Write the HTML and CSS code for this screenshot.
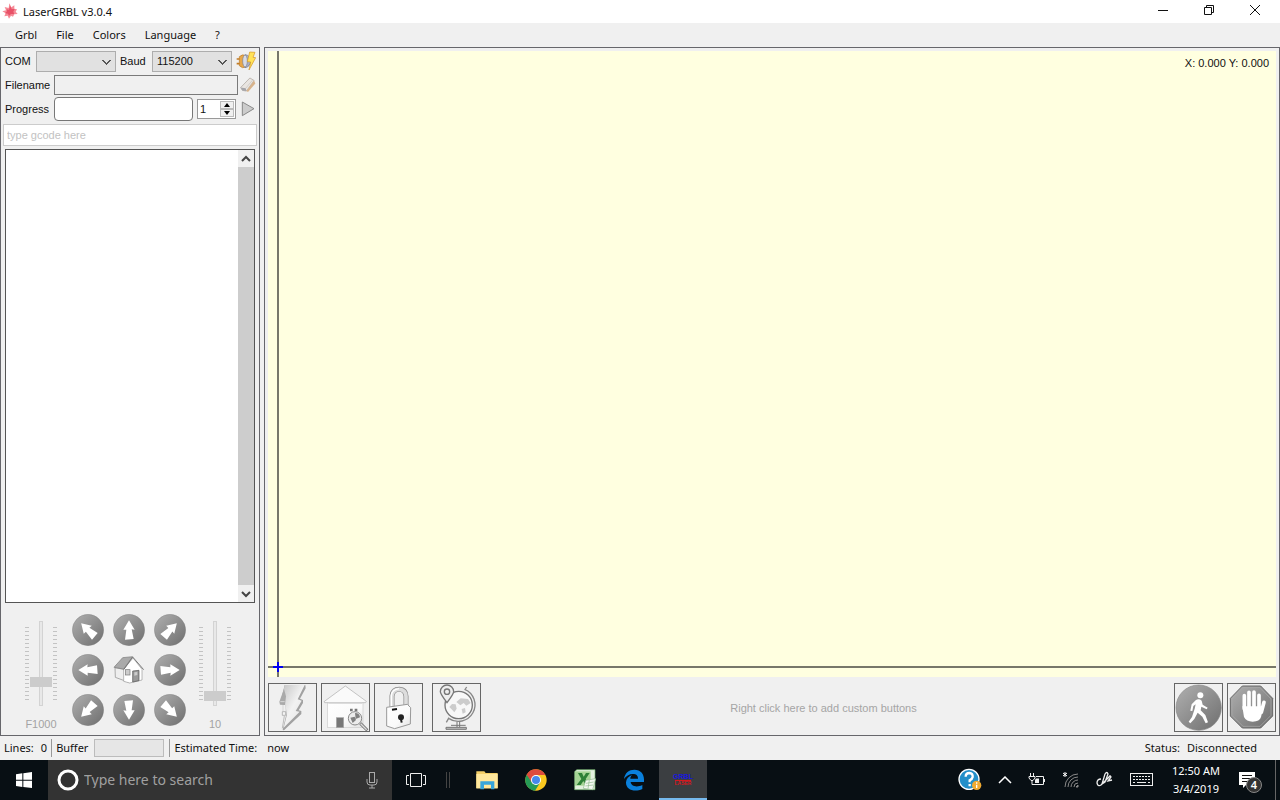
FILE: index.html
```html
<!DOCTYPE html>
<html lang="en">
<head>
<meta charset="utf-8">
<title>LaserGRBL v3.0.4</title>
<link rel="stylesheet" href="styles.css">
</head>
<body>
<svg class="defs" aria-hidden="true">
  <defs>
    <linearGradient id="ball" x1="0" y1="0" x2="1" y2="1"><stop offset="0" stop-color="#b0b0b0"/><stop offset="1" stop-color="#6e6e6e"/></linearGradient>
    <linearGradient id="pale" x1="0" y1="0" x2="1" y2="1"><stop offset="0" stop-color="#c4c4c4"/><stop offset=".5" stop-color="#f2f2f2"/><stop offset="1" stop-color="#e2e2e2"/></linearGradient>
    <linearGradient id="white" x1="0" y1="0" x2="1" y2="1"><stop offset="0" stop-color="#fff"/><stop offset=".6" stop-color="#fafafa"/><stop offset="1" stop-color="#e2e2e2"/></linearGradient>
    <symbol id="arrow" viewBox="0 0 96 96"><path d="M48 19 65 47 56 46 62 75 36 77 40 47 31 47Z" fill="#fff"/></symbol>
  </defs>
</svg>

<header class="titlebar">
  <svg class="app-icon" viewBox="0 0 48 48"><path d="M22 1 28 13 37 7 37 17 45 19 41 26 47 33 37 34 33 41 27 38 21 47 17 38 7 40 11 31 1 25 12 22 8 12 20 15Z" fill="#f58b97"/><path d="M24 8 29 18 38 18 34 26 37 33 27 33 21 38 18 32 9 31 15 25 14 19 21 20Z" fill="#e85268"/></svg>
  <h1 class="title">LaserGRBL v3.0.4</h1>
  <div class="window-buttons">
    <button type="button" aria-label="Minimize"><svg viewBox="0 0 12 12"><path d="M1 6.500H11"/></svg></button>
    <button type="button" aria-label="Restore"><svg viewBox="0 0 12 12"><path d="M1.500 3.500H8.500V10.500H1.500ZM3.500 3.500V1.500H10.500V8.500H8.500"/></svg></button>
    <button type="button" aria-label="Close"><svg viewBox="0 0 12 12"><path d="M1 1 11 11M11 1 1 11"/></svg></button>
  </div>
</header>

<nav class="menubar" aria-label="Main menu">
  <button type="button">Grbl</button><button type="button">File</button><button type="button">Colors</button><button type="button">Language</button><button type="button">?</button>
</nav>

<main class="workspace">
  <section class="panel side" aria-label="Control">
    <div class="form">
      <div class="row">
        <label class="short" for="com">COM</label>
        <select id="com" class="combo"><option></option></select>
        <label class="baud" for="baud">Baud</label>
        <select id="baud" class="combo"><option>115200</option></select>
        <button class="tool large" type="button" aria-label="Connect"><svg viewBox="0 0 60 60"><path d="M2 24H16M2 38H16" stroke="#c07c28" stroke-width="5"/><path d="M10 17Q20 8 28 14V48Q20 54 10 44Z" fill="#e8a748" stroke="#b97825" stroke-width="2"/><path d="M27 11Q42 12 45 30 42 48 27 50 18 31 27 11Z" fill="#a9aec2" stroke="#6e7182" stroke-width="2"/><ellipse cx="27" cy="30" rx="7" ry="18" fill="#d9dbe4" stroke="#7d8090" stroke-width="2"/><path d="M41 3 57 4 51 19 59 20 39 57 44 33 34 32Z" fill="#ffe258" stroke="#d59420" stroke-width="2"/></svg></button>
      </div>
      <div class="row">
        <label for="filename">Filename</label>
        <input id="filename" class="filename" type="text" readonly>
        <button class="tool" type="button" aria-label="Open file"><svg viewBox="6 6 50 50"><path d="M8 39 37 9 50 17 26 50 14 48Z" fill="#e9e5e1" stroke="#a49c94" stroke-width="2"/><path d="M26 50 50 17 54 26 31 53Z" fill="#d8b38b"/><path d="M8 39 24 41 26 50 13 48Z" fill="#a5a5aa"/><path d="M24 41 45 16" stroke="#c7c1bb" stroke-width="2"/></svg></button>
      </div>
      <div class="row">
        <label for="progress">Progress</label>
        <progress id="progress" class="progress" value="0" max="100"></progress>
        <div class="spinner">
          <input type="text" value="1" aria-label="Repeat count">
          <div class="spin-buttons">
            <button type="button" aria-label="Increase"><svg viewBox="0 0 6 4"><path d="M3 0 6 4H0Z"/></svg></button>
            <button type="button" aria-label="Decrease"><svg viewBox="0 0 6 4"><path d="M0 0H6L3 4Z"/></svg></button>
          </div>
        </div>
        <button class="tool" type="button" aria-label="Run"><svg viewBox="6 6 48 48"><path d="M13 9 48 29 13 50Z" fill="#ccc" stroke="#898989" stroke-width="3" stroke-linejoin="round"/></svg></button>
      </div>
    </div>
    <input class="gcode" type="text" placeholder="type gcode here" aria-label="Gcode">
    <div class="log">
      <div class="log-text"></div>
      <div class="scrollbar">
        <button type="button" aria-label="Scroll up"><svg viewBox="0 0 10 8"><path d="M1 6 5 2 9 6"/></svg></button>
        <div class="scroll-thumb"></div>
        <button type="button" aria-label="Scroll down"><svg viewBox="0 0 10 8"><path d="M1 2 5 6 9 2"/></svg></button>
      </div>
    </div>
    <div class="jog">
      <div class="slider">
        <div class="slider-body"><input id="speed" type="range" min="0" max="100" value="25"></div>
        <label for="speed">F1000</label>
      </div>
      <div class="jog-grid">
        <button type="button" aria-label="Up left"><svg viewBox="0 0 96 96"><circle cx="48" cy="48" r="47" fill="url(#ball)" stroke="#777"/><g transform="rotate(-45 48 48)"><use href="#arrow"/></g></svg></button>
        <button type="button" aria-label="Up"><svg viewBox="0 0 96 96"><circle cx="48" cy="48" r="47" fill="url(#ball)" stroke="#777"/><use href="#arrow"/></svg></button>
        <button type="button" aria-label="Up right"><svg viewBox="0 0 96 96"><circle cx="48" cy="48" r="47" fill="url(#ball)" stroke="#777"/><g transform="rotate(45 48 48)"><use href="#arrow"/></g></svg></button>
        <button type="button" aria-label="Left"><svg viewBox="0 0 96 96"><circle cx="48" cy="48" r="47" fill="url(#ball)" stroke="#777"/><g transform="rotate(-90 48 48)"><use href="#arrow"/></g></svg></button>
        <button type="button" aria-label="Home"><svg viewBox="0 0 96 96"><path d="M6 41 32 46 50 86 7 70Z" fill="#eee" stroke="#888" stroke-width="2"/><path d="M32 46 60 12 87 46V78L50 87 32 82Z" fill="#fff" stroke="#999" stroke-width="2"/><path d="M3 40 29 11 59 8 32 45Z" fill="#aaa" stroke="#777" stroke-width="2"/><path d="M32 47 59 9 92 47" fill="none" stroke="#777" stroke-width="3"/><rect x="37" y="47" width="14" height="16" fill="#ccc" stroke="#777" stroke-width="2"/><path d="M59 51 78 49V80L59 84Z" fill="#999" stroke="#555" stroke-width="2"/><path d="M64 55 73 54V63L64 65Z" fill="#ccc"/></svg></button>
        <button type="button" aria-label="Right"><svg viewBox="0 0 96 96"><circle cx="48" cy="48" r="47" fill="url(#ball)" stroke="#777"/><g transform="rotate(90 48 48)"><use href="#arrow"/></g></svg></button>
        <button type="button" aria-label="Down left"><svg viewBox="0 0 96 96"><circle cx="48" cy="48" r="47" fill="url(#ball)" stroke="#777"/><g transform="rotate(-135 48 48)"><use href="#arrow"/></g></svg></button>
        <button type="button" aria-label="Down"><svg viewBox="0 0 96 96"><circle cx="48" cy="48" r="47" fill="url(#ball)" stroke="#777"/><g transform="rotate(180 48 48)"><use href="#arrow"/></g></svg></button>
        <button type="button" aria-label="Down right"><svg viewBox="0 0 96 96"><circle cx="48" cy="48" r="47" fill="url(#ball)" stroke="#777"/><g transform="rotate(135 48 48)"><use href="#arrow"/></g></svg></button>
      </div>
      <div class="slider">
        <div class="slider-body"><input id="step" type="range" min="0" max="100" value="5"></div>
        <label for="step">10</label>
      </div>
    </div>
  </section>

  <section class="panel view" aria-label="Preview">
    <div class="preview">
      <span class="coords">X: 0.000 Y: 0.000</span>
      <svg class="origin" viewBox="0 0 10 10"><path d="M5 0V10M0 5H10" stroke="#0000f0" stroke-width="2"/></svg>
    </div>
    <div class="actions">
      <div class="group">
        <button type="button" aria-label="Reset"><svg viewBox="3 3 141 141"><path d="M50 6H112L113 16 96 47 105 51V60L92 82 100 84V93L48 142 44 141 54 98 53 66 36 62Z" fill="#a2a2a2"/><path d="M50 6H110L89 49 101 53 83 84 95 86 47 134 56 98 53 66 40 60Z" fill="url(#pale)"/><path d="M48 18 34 56 36 65 51 66 54 40Z" fill="#aaa"/><path d="M37 56H50" stroke="#d8d8d8" stroke-width="3"/><path d="M45 66V84" stroke="#ddd" stroke-width="4"/><path d="M43 86H53V97H43Z" fill="#f4f4f4" stroke="#999" stroke-width="2"/><path d="M49 99 43 136" stroke="#bbb" stroke-width="3"/></svg></button>
        <button type="button" aria-label="Homing"><svg viewBox="3 3 141 141"><rect x="20" y="52" width="106" height="82" fill="url(#white)" stroke="#ccc" stroke-width="2"/><path d="M9 56 73 9 136 55 134 59H11Z" fill="#fafafa" stroke="#aaa" stroke-width="2"/><path d="M22 61H124" stroke="#d8d8d8" stroke-width="3"/><rect x="46" y="104" width="22" height="30" fill="#777" stroke="#aaa" stroke-width="2"/><path d="M87 81H95M101 81H109" stroke="#777" stroke-width="8"/><path d="M118 121 139 142" stroke="#777" stroke-width="9"/><path d="M119 122 137 140" stroke="#ddd" stroke-width="4"/><circle cx="102" cy="106" r="20" fill="#ececec" stroke="#888" stroke-width="3"/><path d="M102 90Q116 90 117 103L104 108ZM88 104 101 101 105 111 95 120Z" fill="#808080"/></svg></button>
        <button type="button" aria-label="Unlock"><svg viewBox="3 3 141 141"><path d="M54 75V39Q56 19 76 19 95 20 96 40V70" fill="none" stroke="#888" stroke-width="15"/><path d="M54 75V39Q56 19 76 19 95 20 96 40V70" fill="none" stroke="#ddd" stroke-width="11"/><path d="M52 70V38Q54 19 75 17" fill="none" stroke="#fff" stroke-width="4"/><path d="M38 73 100 64 110 74 109 123 62 137 38 129Z" fill="url(#white)" stroke="#999" stroke-width="3" stroke-linejoin="round"/><path d="M54 80 69 78" stroke="#111" stroke-width="6"/><circle cx="81" cy="103" r="9" fill="#222"/><path d="M80 104 83 119" stroke="#222" stroke-width="6"/></svg></button>
      </div>
      <div class="group">
        <button type="button" aria-label="Set zero"><svg viewBox="3 3 141 141"><circle cx="80" cy="66" r="41" fill="#f8f8f8" stroke="#777" stroke-width="4"/><path d="M98 19A50 50 0 1 1 50 106M98 21 104 12M51 104 43 118" fill="none" stroke="#888" stroke-width="4"/><path d="M52 72 60 63 71 64 74 77 67 88 58 78ZM73 57 86 46 108 48 116 60 103 68 95 60 85 67ZM89 78 99 75 101 88 92 92Z" fill="#ccc"/><path d="M75 116V132M83 116V132" stroke="#777" stroke-width="3"/><path d="M57 127H101M42 139V133H103V139Z" fill="#bbb" stroke="#777" stroke-width="3"/><path d="M45 59Q25 32 25 26A20 20 0 0 1 65 26Q65 32 45 59Z" fill="#eee" stroke="#777" stroke-width="4"/><circle cx="45" cy="26" r="8" fill="#eee" stroke="#777" stroke-width="4"/></svg></button>
      </div>
      <p class="hint">Right click here to add custom buttons</p>
      <div class="group">
        <button type="button" aria-label="Resume"><svg viewBox="3 3 141 141"><circle cx="74" cy="74" r="68" fill="url(#ball)" stroke="#888" stroke-width="2"/><circle cx="79" cy="37" r="9" fill="#fff"/><path d="M65 52Q74 45 83 53L86 65 101 74 98 79 82 71 80 82 94 96 102 118 95 121 85 101 71 89 61 108 49 121 44 116 54 102 62 77 65 64 58 69 55 84 49 83 53 64Z" fill="#fff"/></svg></button>
        <button type="button" aria-label="Stop"><svg viewBox="3 3 141 141"><path d="M46 9H101L137 46V99L101 135H46L10 99V46Z" fill="url(#ball)" stroke="#666" stroke-width="3"/><path d="M47 14H99L132 48V97L99 130H48L15 97V48Z" fill="none" stroke="#aaa" stroke-width="2"/><path d="M52 38V78M66 28V76M81 27V76M96 37V80M111 58 103 88" stroke="#fff" stroke-width="11" stroke-linecap="round"/><path d="M46 70H101L106 85 102 102Q98 116 77 116 58 116 51 102Z" fill="#fff"/></svg></button>
      </div>
    </div>
  </section>
</main>

<footer class="statusbar">
  <span class="lines">Lines: <span>0</span></span>
  <span class="buffer"><label for="buffer">Buffer</label><progress id="buffer" value="0" max="100"></progress></span>
  <span class="time">Estimated Time: <span>now</span></span>
  <span class="status">Status: <span>Disconnected</span></span>
</footer>

<nav class="taskbar" aria-label="Taskbar">
  <button class="app" type="button" aria-label="Start"><svg width="16" height="16" viewBox="0 0 48 48"><path d="M0 7 19 4V23H0ZM22 4 48 0V23H22ZM0 26H19V45L0 42ZM22 26H48V48L22 45Z" fill="#fff"/></svg></button>
  <div class="search">
    <svg width="22" height="22" viewBox="0 0 22 22"><circle cx="11" cy="11" r="9" fill="none" stroke="#fff" stroke-width="3"/></svg>
    <input type="text" placeholder="Type here to search" aria-label="Search">
    <svg width="12" height="18" viewBox="0 0 12 18" fill="none" stroke="#aaa"><rect x="3.500" y="1.500" width="5" height="10"/><path d="M1 8V11Q1 14 4 14H8Q11 14 11 11V8M6 14V17M3 17H9"/></svg>
  </div>
  <button class="app" type="button" aria-label="Task view"><svg width="22" height="16" viewBox="0 0 22 16" fill="none" stroke="#eee"><path d="M5.500 1.500H16.500V14.500H5.500ZM4 3.500H1.500V12.500H4M18 3.500H20.500V12.500H18"/></svg></button>
  <span class="divider"></span>
  <div class="apps">
    <button class="app" type="button" aria-label="File Explorer"><svg width="22" height="20" viewBox="0 0 66 60"><path d="M1 4H25L29 9H65V55H1Z" fill="#f4cf68"/><path d="M1 12H65V55H1Z" fill="#ffe79c"/><path d="M13 55V34H55V58H45V44H24V58H13Z" fill="#37a5da"/></svg></button>
    <button class="app" type="button" aria-label="Chrome"><svg width="22" height="22" viewBox="0 0 66 66"><circle cx="33" cy="33" r="32" fill="#fbc91f"/><path d="M5 17A32 32 0 0 0 30 65L46 40 33 33Z" fill="#259b56"/><path d="M5 17A32 32 0 0 1 61 18H33L20 40Z" fill="#dd4b3e"/><circle cx="33" cy="33" r="15" fill="#fff"/><circle cx="33" cy="33" r="12" fill="#4688ec"/></svg></button>
    <button class="app" type="button" aria-label="Excel"><svg width="22" height="22" viewBox="0 0 66 66"><path d="M8 2H63V62H2V8Z" fill="#e3f1df" stroke="#6fae6b" stroke-width="2"/><path d="M3 7H50V50H3Z" fill="#a5d495"/><path d="M12 12H24L29 23 36 12H47L35 30 47 48H35L28 36 20 48H8L22 30Z" fill="#2e8137"/><path d="M35 34 65 29 56 62 28 58Z" fill="#f4f8f2" stroke="#8eb98b" stroke-width="2"/><path d="M36 43 59 39M34 51 57 48M46 33 42 59" stroke="#8eb98b" stroke-width="2"/></svg></button>
    <button class="app" type="button" aria-label="Edge"><svg width="22" height="22" viewBox="0 0 66 66"><path d="M3 30C6 11 18 2 34 2 53 2 63 15 63 31V39H23C24 51 40 57 58 48V60C34 71 8 62 9 40 10 29 17 22 27 18 23 22 22 26 22 29H45C45 19 39 15 30 15 18 15 9 21 3 30Z" fill="#0a80dc"/></svg></button>
    <button class="app active" type="button" aria-label="LaserGRBL"><span class="logo"><b>GRBL</b><i>LASER</i></span></button>
  </div>
  <div class="tray">
    <button type="button" aria-label="Help"><svg width="24" height="24" viewBox="0 0 72 72"><circle cx="33" cy="34" r="30" fill="#238fc9" stroke="#fff" stroke-width="4"/><path d="M23 26Q23 15 34 15 45 16 44 27 43 33 35 37V43M35 48V55" fill="none" stroke="#fff" stroke-width="7"/><circle cx="56" cy="52" r="14" fill="#f0aa31"/><path d="M56 50V60M56 43V47" stroke="#fff" stroke-width="4"/></svg></button>
    <button type="button" aria-label="Show hidden icons"><svg width="14" height="8" viewBox="0 0 14 8" fill="none" stroke="#fff" stroke-width="1.500"><path d="M1 7 7 1 13 7"/></svg></button>
    <button type="button" aria-label="Battery"><svg width="18" height="14" viewBox="0 0 18 14" fill="none" stroke="#eee"><path d="M8 3.500H15.500V11.500H5.500M16.500 6V9M2.500 0V3M5.500 0V3M1 3.500H7V5L5 7.500H3L1 5ZM4 7.500V11.500H6"/><path d="M8 5.500H11V10H7V7Z" fill="#eee" stroke="none"/></svg></button>
    <button type="button" aria-label="Network"><svg width="18" height="18" viewBox="0 0 18 18" fill="none" stroke="#888"><path d="M3 16A13 13 0 0 1 16 3M6 16A10 10 0 0 1 16 6M9 16A7 7 0 0 1 16 9M12 16A4 4 0 0 1 16 12"/><path d="M14 16 16 14V16Z" fill="#888"/><path d="M3 1V6M1 2 5 5M5 2 1 5" stroke="#fff"/></svg></button>
    <button type="button" aria-label="Ink workspace"><svg width="18" height="18" viewBox="0 0 18 18" fill="none" stroke="#eee" stroke-width="1.300"><path d="M6 13 9 3Q11 0 12 3L9 11ZM5 8Q1 8 1 12 2 16 5 14L13 6Q14 4 15 6L12 10 16 9"/></svg></button>
    <button type="button" aria-label="Touch keyboard"><svg width="24" height="14" viewBox="0 0 24 14" fill="none" stroke="#eee"><rect x=".5" y=".5" width="22" height="12"/><path d="M3 3.500H20M3 6.500H20" stroke-dasharray="2 1"/><path d="M3 9.500H5M7 9.500H16M18 9.500H20"/></svg></button>
    <time class="clock"><span>12:50 AM</span><span>3/4/2019</span></time>
    <button class="notify" type="button" aria-label="Notifications, 4 new"><svg width="18" height="18" viewBox="0 0 18 18"><path d="M1 1H17V14H8L5 17V14H1Z" fill="#fff"/><path d="M4 4.500H14M4 7.500H14M4 10.500H9" stroke="#111"/></svg><span class="badge">4</span></button>
  </div>
  <button class="desktop" type="button" aria-label="Show desktop"></button>
</nav>
</body>
</html>
```

FILE: styles.css
```css
* { box-sizing: border-box; }

body {
  margin: 0;
  height: 100vh;
  display: flex;
  flex-direction: column;
  background: #f0f0f0;
  color: #111;
  font: 11px/16px "Noto Sans", "Open Sans", sans-serif;
  overflow: hidden;
}

button, input, select { font: inherit; color: inherit; margin: 0; }
button { padding: 0; border: 0; background: none; display: flex; align-items: center; justify-content: center; }
svg { display: block; flex: none; }
.defs { position: absolute; width: 0; height: 0; }

/* Title and menu */
.titlebar { height: 23px; flex: none; display: flex; align-items: center; gap: 5px; padding-left: 2px; background: #fff; }
.app-icon { width: 16px; height: 16px; align-self: flex-start; margin-top: 3px; }
.title { margin: 0; font-size: 11px; font-weight: 400; flex: 1; }
.window-buttons { display: flex; align-self: flex-start; padding-right: 2px; }
.window-buttons button { width: 46px; height: 20px; }
.window-buttons svg { width: 12px; height: 12px; fill: none; stroke: #111; }
.menubar { height: 24px; flex: none; display: flex; gap: 1px; padding-left: 6px; }
.menubar button { padding: 0 9px; }

/* Workspace */
.workspace { flex: 1; min-height: 0; display: grid; grid-template-columns: 260px minmax(0, 1fr); gap: 4px; }
.panel { border: 1px solid #66666b; display: flex; flex-direction: column; min-height: 0; }
.side { font-family: "Liberation Sans", Arial, sans-serif; }
.form { padding: 1px 3px 0 4px; }
.row { height: 24px; display: flex; align-items: center; gap: 4px; }
.row label { width: 45px; white-space: nowrap; }
.row .short { width: 27px; }
.row .baud { width: 28px; }
.combo {
  width: 80px;
  height: 21px;
  padding: 0 4px;
  border: 1px solid #adadad;
  border-radius: 0;
  appearance: none;
  background:
    linear-gradient(45deg, transparent 48%, #555 48%, #555 62%, transparent 62%) right 8px top 8px / 5px 5px no-repeat,
    linear-gradient(-45deg, transparent 48%, #555 48%, #555 62%, transparent 62%) right 4px top 8px / 5px 5px no-repeat,
    #e1e1e1;
}
.tool { width: 16px; height: 20px; flex: none; }
.tool svg { width: 16px; height: 16px; }
.large, .large svg { width: 20px; height: 20px; }
.filename { flex: 1; min-width: 0; height: 20px; border: 1px solid #7a7a7a; background: #f0f0f0; }
.filename + .tool { margin-left: -2px; }
.progress { appearance: none; flex: 1; min-width: 0; height: 24px; border: 1px solid #777; border-radius: 4px; background: #fff; }
.progress::-webkit-progress-bar { background: transparent; }
.spinner { width: 39px; height: 20px; display: flex; border: 1px solid #999; background: #fff; padding: 1px; }
.spinner input { flex: 1; min-width: 0; border: 0; padding: 0 1px; background: none; }
.spin-buttons { width: 14px; display: grid; grid-template-rows: 1fr 1fr; }
.spin-buttons button { border: 1px solid #bbb; background: #f0f0f0; }
.spin-buttons svg { width: 6px; height: 4px; }
.gcode { height: 22px; margin: 3px 2px; padding: 0 3px; border: 1px solid #ccc; background: #fff; }
.gcode::placeholder { color: #c2c2c2; opacity: 1; }
.log { flex: 1; min-height: 0; margin: 0 4px; display: flex; border: 1px solid #555; background: #fff; }
.log-text { flex: 1; }
.scrollbar { width: 16px; display: flex; flex-direction: column; background: #f0f0f0; }
.scrollbar button { width: 100%; height: 17px; }
.scrollbar svg { width: 10px; height: 8px; fill: none; stroke: #444; stroke-width: 2; }
.scroll-thumb { flex: 1; background: #cdcdcd; }

/* Jogging */
.jog { height: 132px; flex: none; display: flex; padding: 11px 22px 0 18px; }
.slider { width: 44px; display: flex; flex-direction: column; align-items: center; gap: 10px; padding-top: 7px; color: #a3a3a3; }
.slider-body {
  width: 32px;
  height: 85px;
  display: flex;
  justify-content: center;
  background:
    repeating-linear-gradient(#c3c3c3 0 1px, transparent 1px 4px) left 0 top 6px / 4px 73px no-repeat,
    repeating-linear-gradient(#c3c3c3 0 1px, transparent 1px 4px) right 0 top 6px / 4px 73px no-repeat;
}
.slider input { appearance: none; writing-mode: vertical-lr; direction: rtl; width: 22px; height: 85px; background: none; }
.slider input::-webkit-slider-runnable-track { width: 4px; height: 85px; border: 1px solid #d3d3d3; background: #e8e8e8; }
.slider input::-webkit-slider-thumb { appearance: none; width: 22px; height: 10px; margin-left: -10px; background: #ccc; }
.jog-grid { display: grid; grid-template-columns: repeat(3, 32px); grid-auto-rows: 32px; gap: 8px 9px; align-content: start; margin: 0 7px 0 9px; }
.jog-grid svg { width: 32px; height: 32px; }

/* Preview */
.view { padding: 3px; font-family: "Liberation Sans", Arial, sans-serif; }
.preview {
  position: relative;
  flex: 1;
  min-height: 0;
  padding: 4px 7px;
  text-align: right;
  background:
    linear-gradient(#77776a, #77776a) left 9px top 0 / 2px 100% no-repeat,
    linear-gradient(#77776a, #77776a) left 0 bottom 9px / 100% 2px no-repeat,
    #ffffe0;
}
.origin { position: absolute; left: 5px; bottom: 5px; width: 10px; height: 10px; }
.actions { display: flex; gap: 9px; padding-top: 6px; }
.group { display: flex; gap: 4px; }
.group button { width: 49px; height: 49px; border: 1px solid #666; }
.group svg { width: 47px; height: 47px; }
.hint { flex: 1; margin: 0; padding-right: 8px; align-self: center; text-align: center; color: #a5a5a5; }

/* Status */
.statusbar { height: 24px; flex: none; display: flex; align-items: center; padding: 0 23px 0 4px; }
.statusbar > span { display: flex; align-items: center; gap: 7px; }
.lines, .buffer { height: 18px; padding-right: 4px; border-right: 1px solid #999; margin-right: 4px; }
.statusbar .buffer { gap: 6px; padding-right: 5px; }
.buffer progress { appearance: none; width: 70px; height: 18px; border: 1px solid #bcbcbc; background: #e6e6e6; }
.buffer progress::-webkit-progress-bar { background: transparent; }
.statusbar .time { flex: 1; gap: 10px; }

/* Taskbar */
.taskbar { height: 40px; flex: none; display: flex; align-items: center; background: #080f14; color: #fff; }
.app { width: 48px; height: 40px; flex: none; }
.search { width: 344px; height: 40px; display: flex; align-items: center; gap: 5px; padding: 0 14px 0 9px; background: #333; }
.search input { flex: 1; min-width: 0; padding: 0; border: 0; background: none; font-size: 14px; }
.search input::placeholder { color: #a0a0a0; opacity: 1; }
.divider { width: 4px; height: 16px; margin: 0 13px 0 6px; border: solid #444; border-width: 0 1px; }
.apps { display: flex; gap: 1px; }
.active { background: #3b3e41; border-bottom: 2px solid #76b9ed; }
.logo { display: flex; flex-direction: column; align-items: center; font: 900 7px/7px "Liberation Sans", Arial, sans-serif; }
.logo b { color: #1717e0; }
.logo i { color: #d41920; font-style: normal; font-size: 5px; line-height: 5px; border-top: 1px solid #d41920; }
.tray { flex: 1; display: flex; align-items: center; justify-content: flex-end; gap: 16px; padding-right: 19px; }
.clock { display: flex; flex-direction: column; width: 52px; align-items: center; line-height: 18px; white-space: nowrap; }
.notify { position: relative; }
.badge { position: absolute; left: 8px; top: 6px; width: 16px; height: 16px; border: 1px solid #888; border-radius: 50%; background: #333; font-weight: 600; line-height: 14px; text-align: center; }
.desktop { width: 5px; height: 40px; border-left: 1px solid #666; }
```
